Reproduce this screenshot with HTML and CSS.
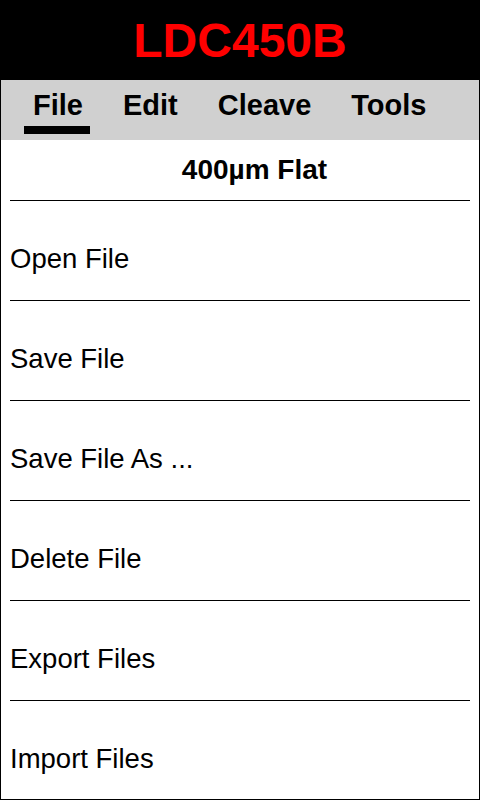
FILE: index.html
```html
<!DOCTYPE html>
<html>
<head>
<meta charset="utf-8">
<link rel="stylesheet" href="styles.css">
</head>
<body>
<div class="app">
  <header class="header"><h1 class="title">LDC450B</h1></header>
  <nav class="tabs">
    <div class="tab active">File</div>
    <div class="tab">Edit</div>
    <div class="tab">Cleave</div>
    <div class="tab">Tools</div>
  </nav>
  <div class="subtitle">400µm Flat</div>
  <ul class="menu">
    <li class="item">Open File</li>
    <li class="item">Save File</li>
    <li class="item">Save File As ...</li>
    <li class="item">Delete File</li>
    <li class="item">Export Files</li>
    <li class="item">Import Files</li>
  </ul>
</div>
</body>
</html>
```
FILE: styles.css
```css
html, body {
  margin: 0;
  padding: 0;
  background: #fff;
}
body {
  font-family: "Liberation Sans", Arial, sans-serif;
  color: #000;
}
.app {
  width: 480px;
  height: 800px;
  box-sizing: border-box;
  border: 1px solid #000;
  overflow: hidden;
  display: flex;
  flex-direction: column;
}
.header {
  height: 79px;
  flex: none;
  background: #000;
  display: flex;
  align-items: center;
  justify-content: center;
}
.title {
  margin: 0;
  color: #ff0000;
  font-size: 48px;
  font-weight: bold;
  line-height: 55px;
}
.tabs {
  height: 60px;
  flex: none;
  box-sizing: border-box;
  background: #d0d0d0;
  display: flex;
  align-items: flex-start;
  gap: 24px;
  padding: 8px 0 0 23px;
}
.tab {
  font-size: 29px;
  font-weight: bold;
  line-height: 34px;
  padding: 0 7px 4px 9px;
  border-bottom: 8px solid transparent;
}
.tab.active {
  border-bottom-color: #000;
}
.subtitle {
  height: 60px;
  flex: none;
  box-sizing: border-box;
  padding-left: 29px;
  display: flex;
  align-items: center;
  justify-content: center;
  font-size: 28px;
  font-weight: bold;
  line-height: 32px;
}
.menu {
  list-style: none;
  margin: 0;
  padding: 0;
}
.item {
  margin: 0 9px;
  border-top: 1px solid #000;
  padding: 42px 0 0;
  height: 57px;
  font-size: 27.5px;
  line-height: 32px;
}
```
